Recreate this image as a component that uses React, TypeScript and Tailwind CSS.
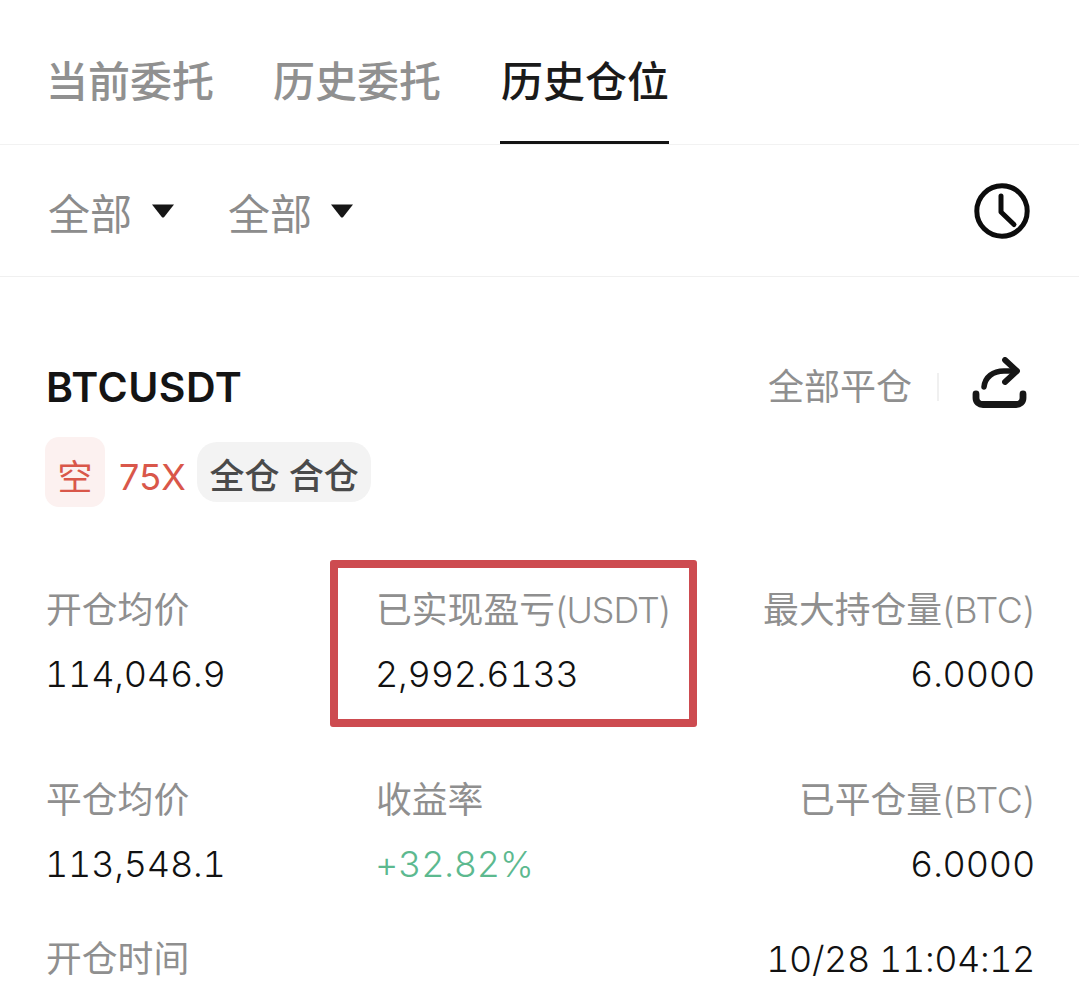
const cjk = "font-['Inter','Noto_Sans_CJK_SC',sans-serif]";

function Caret() {
  return (
    <svg width="24" height="16" viewBox="0 0 24 16" className="block">
      <path d="M1 1.5 H23 L13.2 14 Q12 15.2 10.8 14 Z" fill="#161616" />
    </svg>
  );
}

function Clock() {
  return (
    <svg width="56" height="56" viewBox="0 0 56 56" fill="none" stroke="#0c0c0c" strokeLinecap="round" strokeLinejoin="round">
      <circle cx="28" cy="28" r="25.2" strokeWidth="5" />
      <path d="M27 13 V29 L40 41.5" strokeWidth="5" />
    </svg>
  );
}

function Share() {
  return (
    <svg width="56" height="52" viewBox="0 0 56 52" fill="none" stroke="#161616" strokeLinecap="round" strokeLinejoin="round">
      <path d="M12 30 C13 20 21 14 32 14 H44" strokeWidth="5.5" />
      <path d="M33 3 L45 14 L33 25" strokeWidth="5.8" />
      <path d="M4 37 V41 C4 45 7 47.5 11 47.5 H44 C48 47.5 51 45 51 41 V37" strokeWidth="6.8" />
    </svg>
  );
}

function Cell({ label, unit, unitClass, value, right, valueClass }: { label: string; unit?: string; unitClass?: string; value: string; right?: boolean; valueClass?: string }) {
  return (
    <div className={`flex flex-col ${right ? "items-end" : "items-start"}`}>
      <div className="pl-[1px] text-[35.8px] leading-[46px] text-[#8f8f8f] whitespace-nowrap">
        {label}
        {unit ? <span className={`font-light ${unitClass ?? ""}`}>{unit}</span> : null}
      </div>
      <div className={`mt-[18px] text-[36px] leading-[46px] font-light tabular-nums tracking-[-0.2px] whitespace-nowrap ${valueClass ?? "text-[#111111]"}`}>{value}</div>
    </div>
  );
}

export default function App() {
  return (
    <div className={`relative w-[1079px] h-[1003px] overflow-hidden bg-white ${cjk}`}>
      <div className="flex h-[145px] border-b border-[#f2f2f2] pl-[46px] gap-[59px]">
        <div className="pt-[54px] text-[42px] leading-[56px] font-medium text-[#909090]">当前委托</div>
        <div className="pt-[54px] text-[42px] leading-[56px] font-medium text-[#909090]">历史委托</div>
        <div className="h-[144px] border-b-[3px] border-[#141414] pl-[1px] pt-[54px] text-[42px] leading-[56px] font-medium text-[#1a1a1a]">历史仓位</div>
      </div>

      <div className="flex h-[132px] items-center border-b border-[#f0f0f0] pl-[48px] pr-[49px]">
        <div className="flex items-center gap-[19px] text-[42px] leading-[56px] text-[#8c8c8c]">
          <span className="pt-[8px]">全部</span>
          <Caret />
        </div>
        <div className="ml-[53px] flex items-center gap-[18px] text-[42px] leading-[56px] text-[#8c8c8c]">
          <span className="pt-[8px]">全部</span>
          <Caret />
        </div>
        <div className="ml-auto"><Clock /></div>
      </div>

      <div className="pl-[45px] pr-[44px] pt-[80px]">
        <div className="flex items-center justify-between">
          <div className="pl-[1px] text-[41px] leading-[50px] font-semibold tracking-[0.5px] text-[#141414]">BTCUSDT</div>
          <div className="flex items-center">
            <div className="text-[36px] leading-[46px] text-[#8f8f8f]">全部平仓</div>
            <div className="ml-[25px] h-[28px] w-[2px] bg-[#f0f0f0]" />
            <div className="ml-[33px] mb-[8px] mr-[7px]"><Share /></div>
          </div>
        </div>

        <div className="mt-[20px] flex items-center">
          <div className="flex h-[70px] w-[60px] items-center justify-center rounded-[14px] bg-[#fcf1f0] pt-[10px] text-[35px] text-[#d9574a]">空</div>
          <div className="ml-[14px] pt-[10px] text-[36px] tracking-[0.2px] text-[#d9574a]">75X</div>
          <div className="ml-[11px] flex h-[60px] w-[174px] items-center justify-center rounded-[20px] bg-[#f3f3f3] pt-[8px] text-[35px] font-medium text-[#4a4a4a]">全仓 合仓</div>
        </div>

        <div className="mt-[80px] grid grid-cols-[330px_1fr_auto] gap-y-[80px]">
          <Cell label="开仓均价" value="114,046.9" />
          <Cell label="已实现盈亏" unit="(USDT)" unitClass="tracking-[-1px]" value="2,992.6133" />
          <Cell label="最大持仓量" unit="(BTC)" unitClass="tracking-[-0.2px]" value="6.0000" right />
          <Cell label="平仓均价" value="113,548.1" />
          <Cell label="收益率" value="+32.82%" valueClass="text-[#5cb98f]" />
          <Cell label="已平仓量" unit="(BTC)" unitClass="tracking-[-0.2px]" value="6.0000" right />
        </div>

        <div className="mt-[49px] flex items-center justify-between">
          <div className="pl-[1px] text-[35.8px] leading-[46px] text-[#8f8f8f]">开仓时间</div>
          <div className="text-[36px] leading-[46px] font-light tabular-nums tracking-[-0.4px] text-[#111111]">10/28 11:04:12</div>
        </div>
      </div>

      <div className="absolute left-[330px] top-[560px] h-[167px] w-[367px] rounded-[3px] border-[8px] border-[#cd4b50]" />
    </div>
  );
}
